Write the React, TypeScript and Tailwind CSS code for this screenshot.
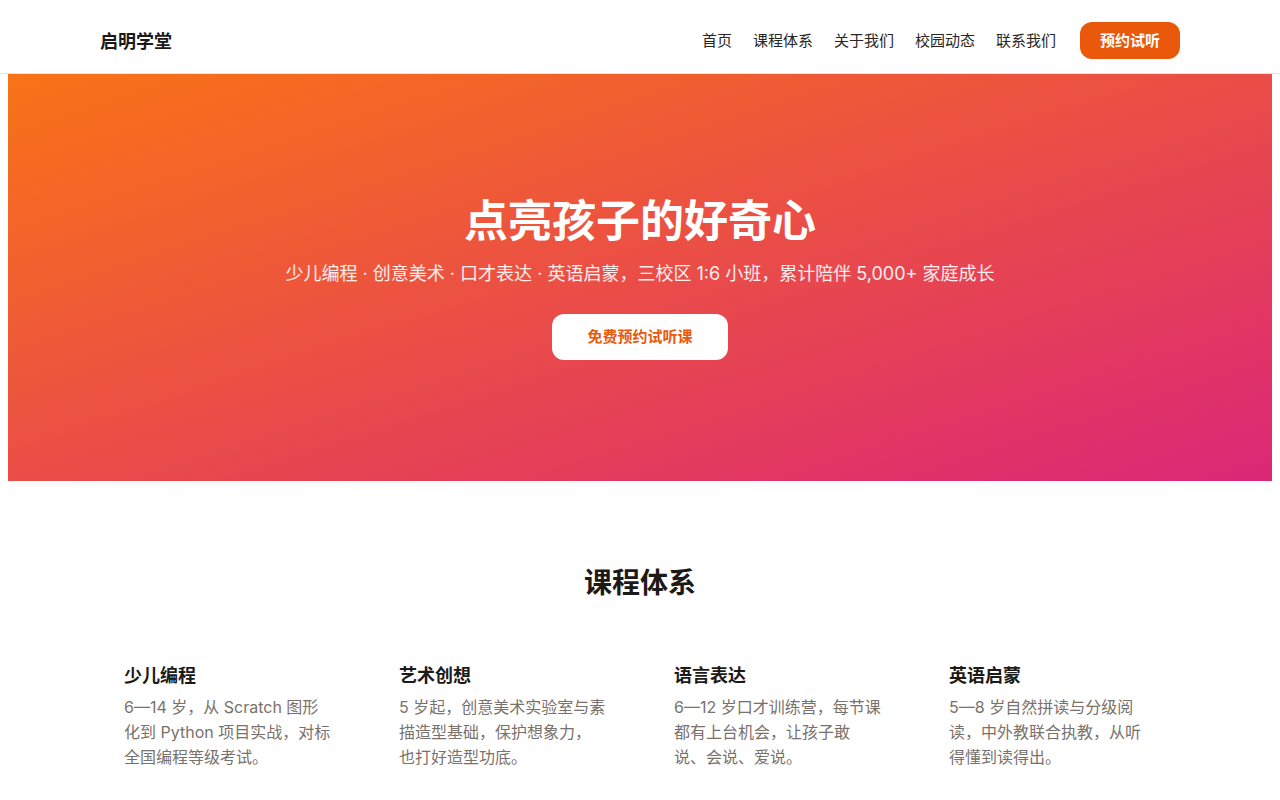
const NAV_ITEMS = ["首页", "课程体系", "关于我们", "校园动态", "联系我们"];

// 年龄段用长一点的破折号，和原稿的宽度、换行位置对得上
const COURSES: { title: string; desc: string }[] = [
  { title: "少儿编程", desc: "6—14 岁，从 Scratch 图形化到 Python 项目实战，对标全国编程等级考试。" },
  { title: "艺术创想", desc: "5 岁起，创意美术实验室与素描造型基础，保护想象力，也打好造型功底。" },
  { title: "语言表达", desc: "6—12 岁口才训练营，每节课都有上台机会，让孩子敢说、会说、爱说。" },
  { title: "英语启蒙", desc: "5—8 岁自然拼读与分级阅读，中外教联合执教，从听得懂到读得出。" },
];

function Header() {
  return (
    <header className="border-b border-stone-200 bg-white">
      <div className="mx-auto flex max-w-[1080px] items-center justify-between pt-[22px] pb-[14px]">
        <div className="pt-0.5 text-[18px] font-bold text-stone-900">启明学堂</div>
        <nav className="flex items-center">
          <ul className="flex items-center gap-[21px]">
            {NAV_ITEMS.map((item) => (
              <li key={item}>
                <a href="#" className="text-[15px] text-stone-800">
                  {item}
                </a>
              </li>
            ))}
          </ul>
          <a
            href="#"
            className="ml-6 rounded-xl bg-[#ea580c] px-5 py-2 text-[15px] leading-[21px] font-bold text-white"
          >
            预约试听
          </a>
        </nav>
      </div>
    </header>
  );
}

function Hero() {
  return (
    <section className="mx-2 flex h-[407px] flex-col items-center justify-center bg-linear-to-br/srgb from-[#f97316] to-[#db2777] text-white">
      <h1 className="text-[44px] leading-[53px] font-bold">点亮孩子的好奇心</h1>
      <p className="mt-3 text-[18px] leading-7 text-white/90">
        少儿编程 · 创意美术 · 口才表达 · 英语启蒙，三校区 1:6 小班，累计陪伴 5,000+ 家庭成长
      </p>
      <a
        href="#"
        className="mt-[26px] flex h-[46px] w-[176px] items-center justify-center rounded-xl bg-white text-[15px] font-bold text-[#ea580c]"
      >
        免费预约试听课
      </a>
    </section>
  );
}

function Courses() {
  return (
    <section className="pt-[84px] pb-10">
      <h2 className="text-center text-[28px] leading-9 font-bold text-stone-900">课程体系</h2>
      <div className="mx-auto mt-[37px] grid max-w-[1080px] grid-cols-4 gap-5">
        {COURSES.map((c) => (
          <div key={c.title} className="p-6">
            <h3 className="text-[18px] leading-[27px] font-bold text-stone-900">{c.title}</h3>
            <p className="mt-1.5 text-[16px] leading-[25px] text-stone-500">{c.desc}</p>
          </div>
        ))}
      </div>
    </section>
  );
}

export default function App() {
  return (
    <div
      className="min-h-screen bg-white"
      style={{ fontFamily: 'Inter, "Noto Sans CJK SC", sans-serif' }}
    >
      <Header />
      <Hero />
      <Courses />
    </div>
  );
}
